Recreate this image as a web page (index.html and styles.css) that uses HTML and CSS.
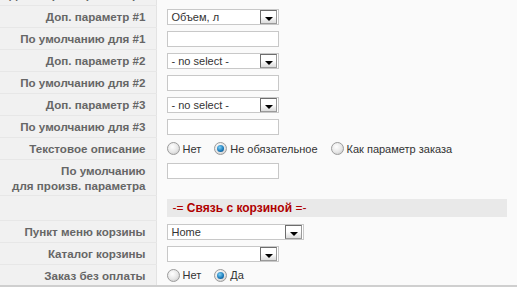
FILE: index.html
```html
<!DOCTYPE html>
<html lang="ru">
<head>
    <meta charset="UTF-8">
    <title>Параметры</title>
    <link rel="stylesheet" href="styles.css">
</head>
<body>
    <div class="wrap">
    <table class="params">
        <colgroup>
            <col class="c-key">
            <col>
        </colgroup>
        <tr>
            <td class="key">Доп. параметры товара</td>
            <td class="val"></td>
        </tr>
        <tr>
            <td class="key">Доп. параметр #1</td>
            <td class="val"><div class="select"><span class="txt">Объем, л</span><span class="btn"></span></div></td>
        </tr>
        <tr>
            <td class="key">По умолчанию для #1</td>
            <td class="val"><input type="text" class="inp"></td>
        </tr>
        <tr>
            <td class="key">Доп. параметр #2</td>
            <td class="val"><div class="select"><span class="txt">- no select -</span><span class="btn"></span></div></td>
        </tr>
        <tr>
            <td class="key">По умолчанию для #2</td>
            <td class="val"><input type="text" class="inp"></td>
        </tr>
        <tr>
            <td class="key">Доп. параметр #3</td>
            <td class="val"><div class="select"><span class="txt">- no select -</span><span class="btn"></span></div></td>
        </tr>
        <tr>
            <td class="key">По умолчанию для #3</td>
            <td class="val"><input type="text" class="inp"></td>
        </tr>
        <tr>
            <td class="key">Текстовое описание</td>
            <td class="val">
                <div class="radios">
                    <label><span class="radio"></span>Нет</label>
                    <label><span class="radio on"></span>Не обязательное</label>
                    <label><span class="radio"></span>Как параметр заказа</label>
                </div>
            </td>
        </tr>
        <tr class="tall">
            <td class="key">По умолчанию<br>для произв. параметра</td>
            <td class="val"><input type="text" class="inp"></td>
        </tr>
        <tr class="head">
            <td class="key"></td>
            <td class="val"><div class="section">-= <b>Связь с корзиной</b> =-</div></td>
        </tr>
        <tr>
            <td class="key">Пункт меню корзины</td>
            <td class="val"><div class="select wide"><span class="txt">Home</span><span class="btn"></span></div></td>
        </tr>
        <tr>
            <td class="key">Каталог корзины</td>
            <td class="val"><div class="select"><span class="txt"></span><span class="btn"></span></div></td>
        </tr>
        <tr class="last">
            <td class="key">Заказ без оплаты</td>
            <td class="val">
                <div class="radios">
                    <label><span class="radio"></span>Нет</label>
                    <label><span class="radio on"></span>Да</label>
                </div>
            </td>
        </tr>
    </table>
    </div>
</body>
</html>
```

FILE: styles.css
```css
body {
    margin: 0;
    background-color: #fafafa;
    font-family: "Liberation Sans", Arial, sans-serif;
    font-size: 12px;
}
.wrap {
    overflow: hidden;
    height: 287px;
}
.params {
    width: 100%;
    table-layout: fixed;
    border-collapse: collapse;
    margin-top: -17px;
}
.params col.c-key {
    width: 156px;
}
.params td {
    height: 22px;
    box-sizing: border-box;
    padding: 3px 10px 2px;
    vertical-align: middle;
    border-bottom: 1px solid #e7e7e7;
}
.params td.key {
    padding-left: 0;
    background-color: #f1f1f1;
    border-right: 1px solid #e3e3e3;
    text-align: right;
    font-weight: bold;
    font-size: 11.6px;
    color: #666;
    line-height: 15px;
    white-space: nowrap;
    overflow: hidden;
}
.params td.val {
    background-color: #fafafa;
    border-bottom-color: #fafafa;
    color: #333;
}
.params tr.tall td {
    height: 36px;
    vertical-align: top;
    padding-top: 3px;
}
.params tr.head td {
    height: 25px;
}
.params tr.last td {
    border-bottom: 2px solid #cfcfcf;
}
.inp {
    display: block;
    width: 112px;
    height: 16px;
    box-sizing: border-box;
    margin: 0;
    border: 1px solid #c8c8c8;
    background: #fff;
    padding: 0 4px;
}
.select {
    display: flex;
    align-items: center;
    width: 112px;
    height: 16px;
    box-sizing: border-box;
    border: 1px solid #c8c8c8;
    background: #fff;
    font-size: 11px;
    color: #333;
}
.select.wide {
    width: 137px;
}
.select .txt {
    flex: 1;
    padding-left: 4px;
    line-height: 14px;
    white-space: nowrap;
}
.select .btn {
    position: relative;
    width: 15px;
    height: 12px;
    margin-right: 1px;
    border: 1px solid #6d6d6d;
    border-right-color: #9a9a9a;
    border-bottom-color: #9a9a9a;
    background: linear-gradient(#ffffff, #ffffff 45%, #dcdcdc);
}
.select .btn::after {
    content: "";
    position: absolute;
    left: 4px;
    bottom: 2px;
    border-left: 4px solid transparent;
    border-right: 4px solid transparent;
    border-top: 4px solid #000;
}
.radios {
    display: flex;
    gap: 13px;
    align-items: center;
    font-size: 11px;
}
.radios label {
    display: flex;
    align-items: center;
    gap: 3px;
    color: #333;
}
.radio {
    width: 11px;
    height: 11px;
    border-radius: 50%;
    border: 1px solid #9c9c9c;
    background: radial-gradient(circle at 40% 35%, #ffffff, #e6e6e6 55%, #bdbdbd);
    display: inline-block;
    position: relative;
}
.radio.on::after {
    content: "";
    position: absolute;
    left: 2px;
    top: 2px;
    width: 7px;
    height: 7px;
    border-radius: 50%;
    background: radial-gradient(circle at 40% 35%, #7fd0f5, #1677b8 60%, #0b3f6e);
}
.section {
    height: 18px;
    line-height: 18px;
    background-color: #e9e9e9;
    padding-left: 6px;
    color: #b00000;
    font-size: 12px;
}
.section b {
    font-weight: bold;
}
```
